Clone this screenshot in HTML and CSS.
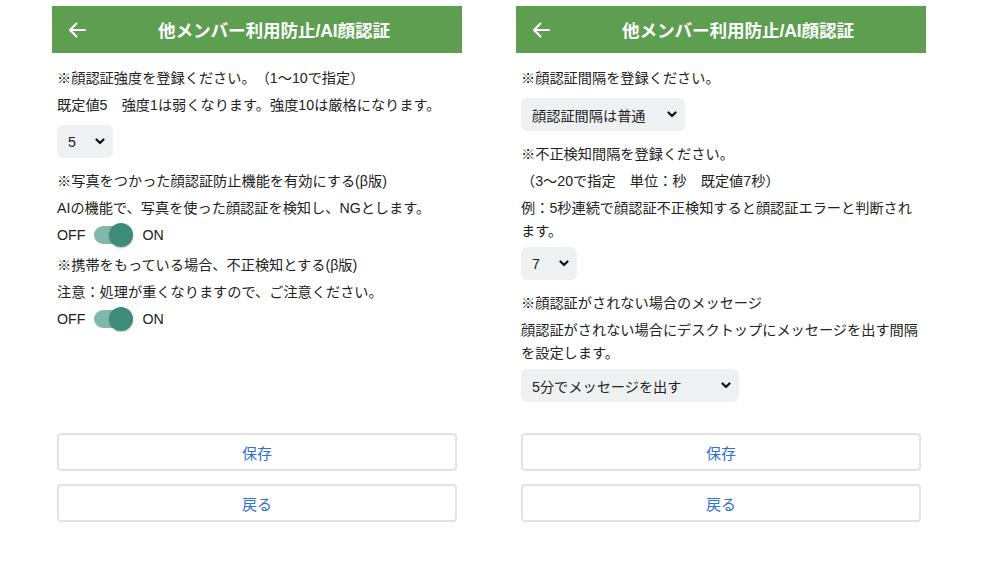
FILE: index.html
```html
<!DOCTYPE html>
<html lang="ja">
<head>
<meta charset="utf-8">
<link rel="stylesheet" href="styles.css">
</head>
<body>
<div class="page">
  <section class="panel">
    <header class="bar">
      <svg class="back" width="18" height="16" viewBox="0 0 18 16"><path d="M17 8H2M8.5 1.5L2 8l6.5 6.5" fill="none" stroke="#fff" stroke-width="2" stroke-linecap="round" stroke-linejoin="round"/></svg>
      <h1 class="title">他メンバー利用防止/AI顔認証</h1>
    </header>
    <div class="body">
      <p class="line">※顔認証強度を登録ください。（1〜10で指定）</p>
      <p class="line">既定値5　強度1は弱くなります。強度10は厳格になります。</p>
      <div class="select sel-num"><span>5</span><svg class="chev" width="10" height="7" viewBox="0 0 10 7"><path d="M1.5 1.5L5 5l3.5-3.5" fill="none" stroke="#111" stroke-width="2.2" stroke-linecap="round" stroke-linejoin="round"/></svg></div>
      <p class="line">※写真をつかった顔認証防止機能を有効にする(β版)</p>
      <p class="line">AIの機能で、写真を使った顔認証を検知し、NGとします。</p>
      <div class="toggle-row"><span>OFF</span><span class="switch"><span class="knob"></span></span><span>ON</span></div>
      <p class="line">※携帯をもっている場合、不正検知とする(β版)</p>
      <p class="line">注意：処理が重くなりますので、ご注意ください。</p>
      <div class="toggle-row"><span>OFF</span><span class="switch"><span class="knob"></span></span><span>ON</span></div>
    </div>
    <div class="actions">
      <button class="btn">保存</button>
      <button class="btn">戻る</button>
    </div>
  </section>

  <section class="panel">
    <header class="bar">
      <svg class="back" width="18" height="16" viewBox="0 0 18 16"><path d="M17 8H2M8.5 1.5L2 8l6.5 6.5" fill="none" stroke="#fff" stroke-width="2" stroke-linecap="round" stroke-linejoin="round"/></svg>
      <h1 class="title">他メンバー利用防止/AI顔認証</h1>
    </header>
    <div class="body">
      <p class="line">※顔認証間隔を登録ください。</p>
      <div class="select sel-interval"><span>顔認証間隔は普通</span><svg class="chev" width="10" height="7" viewBox="0 0 10 7"><path d="M1.5 1.5L5 5l3.5-3.5" fill="none" stroke="#111" stroke-width="2.2" stroke-linecap="round" stroke-linejoin="round"/></svg></div>
      <p class="line">※不正検知間隔を登録ください。</p>
      <p class="line">（3〜20で指定　単位：秒　既定値7秒）</p>
      <p class="line">例：5秒連続で顔認証不正検知すると顔認証エラーと判断されます。</p>
      <div class="select sel-num after-multi"><span>7</span><svg class="chev" width="10" height="7" viewBox="0 0 10 7"><path d="M1.5 1.5L5 5l3.5-3.5" fill="none" stroke="#111" stroke-width="2.2" stroke-linecap="round" stroke-linejoin="round"/></svg></div>
      <p class="line">※顔認証がされない場合のメッセージ</p>
      <p class="line">顔認証がされない場合にデスクトップにメッセージを出す間隔を設定します。</p>
      <div class="select sel-msg after-multi"><span>5分でメッセージを出す</span><svg class="chev" width="10" height="7" viewBox="0 0 10 7"><path d="M1.5 1.5L5 5l3.5-3.5" fill="none" stroke="#111" stroke-width="2.2" stroke-linecap="round" stroke-linejoin="round"/></svg></div>
    </div>
    <div class="actions">
      <button class="btn">保存</button>
      <button class="btn">戻る</button>
    </div>
  </section>
</div>
</body>
</html>
```

FILE: styles.css
```css
html, body {
  margin: 0;
  padding: 0;
  background: #fff;
}
body {
  font-family: "Liberation Sans", "Noto Sans CJK JP", sans-serif;
  color: #222;
  font-size: 14.2px;
  text-spacing-trim: space-all;
}
.page {
  display: flex;
  gap: 54px;
  padding: 6px 0 0 52px;
}
.panel {
  width: 410px;
  height: 516px;
  display: flex;
  flex-direction: column;
}
.bar {
  height: 47px;
  background: #5e9e51;
  display: flex;
  align-items: center;
  padding-left: 16px;
  box-sizing: border-box;
}
.back {
  flex: none;
}
.title {
  flex: 1;
  margin: 0;
  text-align: center;
  color: #fff;
  font-size: 17.6px;
  font-weight: 700;
  letter-spacing: -0.1px;
}
.body {
  flex: 1;
  padding: 12px 5px 0;
}
.line {
  margin: 0;
  padding: 2px 0;
  line-height: 23px;
}
.select {
  display: flex;
  align-items: center;
  justify-content: space-between;
  height: 33px;
  box-sizing: border-box;
  background: #eff0f2;
  border-radius: 6px;
  padding: 0 8px 0 11px;
  margin: 6px 0 10px;
}
.after-multi { margin-top: 2px; }
.sel-num { width: 56px; }
.sel-interval { width: 164px; }
.sel-msg { width: 218px; }
.chev { flex: none; }
.toggle-row {
  display: flex;
  align-items: center;
  height: 26px;
  margin-bottom: 4px;
  gap: 9px;
}
.switch {
  position: relative;
  width: 39px;
  height: 18px;
  border-radius: 9px;
  background: #80b8ab;
}
.knob {
  position: absolute;
  right: 0;
  top: -3px;
  width: 24px;
  height: 24px;
  border-radius: 50%;
  background: #3f8b7a;
  box-shadow: 0 1px 2px rgba(0,0,0,0.25);
}
.actions {
  display: flex;
  flex-direction: column;
  gap: 13px;
  padding: 0 5px;
}
.btn {
  height: 38px;
  background: #fff;
  border: 2px solid #e2e3e5;
  border-radius: 4px;
  font-family: "Liberation Sans", "Noto Sans CJK JP", sans-serif;
  font-size: 15px;
  color: #2f6fd8;
  cursor: pointer;
}
```
